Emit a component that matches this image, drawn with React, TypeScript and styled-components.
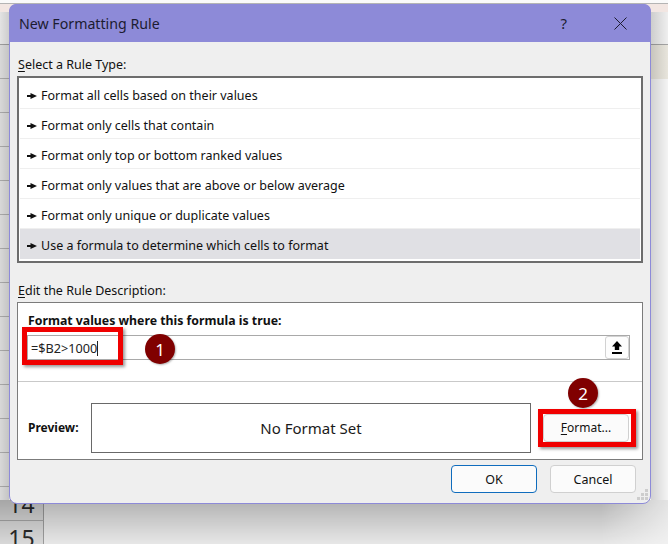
import React from "react";
import styled, { createGlobalStyle } from "styled-components";

const Global = createGlobalStyle`
  html, body { margin: 0; padding: 0; }
  body { width: 668px; height: 544px; overflow: hidden; background: #f4f4f4; font-family: "Noto Sans", "Open Sans", sans-serif; }
`;

const Sheet = styled.div`
  position: relative;
  width: 668px;
  height: 544px;
  overflow: hidden;
  background: #f2f2f2;
  display: flex;
  flex-direction: column;
`;

const TabStrip = styled.div`
  flex: none;
  height: 4px;
  box-sizing: border-box;
  background: #fafafa;
  border-bottom: 1px solid #b4b4b4;
`;

const ColumnHeader = styled.div`
  flex: none;
  height: 41px;
  box-sizing: border-box;
  border-bottom: 1px solid #a4a4a4;
  background: linear-gradient(#f2e6e2 0, #f2e6e2 8px, #efefef 8px);
`;

const SheetRow = styled.div`
  flex: none;
  height: 34px;
  display: flex;
`;

const RowNumber = styled.div`
  flex: none;
  width: 44px;
  box-sizing: border-box;
  background: #e4e4e4;
  border-right: 1px solid #a4a4a4;
  border-bottom: 1px solid #b0b0b0;
  color: #2c2c2c;
  font-size: 23px;
  line-height: 34px;
  text-align: center;
`;

const SheetCell = styled.div<{ $filled?: boolean }>`
  flex: 1;
  background: ${(p) => (p.$filled ? "#e8e5dc" : "#f4f4f4")};
`;

const ShadowBelow = styled.div`
  position: absolute;
  left: 0;
  top: 500px;
  width: 668px;
  height: 44px;
  background: linear-gradient(rgba(0, 0, 0, 0.27), rgba(0, 0, 0, 0.05));
  -webkit-mask-image: linear-gradient(to right, #000 90%, rgba(0, 0, 0, 0.25));
  mask-image: linear-gradient(to right, #000 90%, rgba(0, 0, 0, 0.25));
`;

const ShadowRight = styled.div`
  position: absolute;
  left: 651px;
  top: 12px;
  width: 17px;
  height: 488px;
  background: linear-gradient(to right, rgba(0, 0, 0, 0.14), rgba(0, 0, 0, 0));
`;

const ShadowLeft = styled.div`
  position: absolute;
  left: 0;
  top: 12px;
  width: 9px;
  height: 488px;
  background: linear-gradient(to left, rgba(0, 0, 0, 0.14), rgba(0, 0, 0, 0.05));
`;

const Dialog = styled.div`
  position: absolute;
  left: 9px;
  top: 4px;
  width: 642px;
  height: 500px;
  box-sizing: border-box;
  background: #efefef;
  border: 1px solid #8d8ad8;
  border-radius: 8px;
  display: flex;
  flex-direction: column;
`;

const TitleBar = styled.div`
  flex: none;
  height: 38px;
  margin: -1px -1px 0;
  padding: 0 24px 0 10px;
  background: #8d8ad8;
  border-radius: 7px 7px 0 0;
  display: flex;
  align-items: center;
  color: #1c1c30;
  font-size: 14.2px;
`;

const TitleText = styled.span`
  flex: 1;
`;

const HelpGlyph = styled.span`
  font-size: 15px;
  margin-right: 47px;
`;

const Body = styled.div`
  flex: 1;
  display: flex;
  flex-direction: column;
  padding: 11px 7px 0 7px;
`;

const SectionLabel = styled.div`
  box-sizing: border-box;
  height: 23px;
  padding: 4px 0 0 1px;
  font-size: 12.5px;
  line-height: 16px;
  color: #111;
`;

const RuleList = styled.div`
  box-sizing: border-box;
  height: 187px;
  margin-bottom: 16px;
  padding: 1px;
  background: #fff;
  border: 2px solid #6d6d6d;
`;

const RuleRow = styled.div<{ $active?: boolean }>`
  box-sizing: border-box;
  height: 30px;
  display: flex;
  align-items: center;
  gap: 4px;
  padding: 4px 0 0 7px;
  font-size: 12.5px;
  color: #111;
  border-bottom: 1px solid ${(p) => (p.$active ? "transparent" : "#efefef")};
  background: ${(p) => (p.$active ? "#e0e0e4" : "#fff")};
`;

const Panel = styled.div`
  box-sizing: border-box;
  height: 158px;
  background: #fff;
  border: 1px solid #7b7b7b;
  display: flex;
  flex-direction: column;
`;

const PanelTop = styled.div`
  flex: none;
  box-sizing: border-box;
  height: 79px;
  padding: 10px 12px 0 9px;
  border-bottom: 1px solid #c9c9c9;
`;

const BoldLabel = styled.div`
  margin: 0 0 6px 1px;
  font-weight: 700;
  font-size: 12.3px;
  line-height: 16px;
  color: #111;
`;

const Formula = styled.div`
  box-sizing: border-box;
  height: 25px;
  padding-left: 3px;
  border: 1px solid #a9a9a9;
  display: flex;
  align-items: center;
  justify-content: space-between;
  font-size: 12.7px;
  color: #222;
`;

const Caret = styled.span`
  display: inline-block;
  width: 1px;
  height: 15px;
  background: #222;
  vertical-align: -3px;
`;

const CollapseButton = styled.div`
  box-sizing: border-box;
  width: 24px;
  height: 23px;
  border: 1px solid #d2d2d2;
  border-radius: 3px;
  background: #fdfdfd;
  display: flex;
  align-items: center;
  justify-content: center;
`;

const PreviewRow = styled.div`
  flex: 1;
  display: flex;
  align-items: center;
  padding: 14px 0 0 10px;
`;

const PreviewLabel = styled.div`
  width: 63px;
  font-weight: 700;
  font-size: 12px;
  color: #111;
`;

const PreviewBox = styled.div`
  box-sizing: border-box;
  width: 440px;
  height: 50px;
  margin-right: 12px;
  border: 1px solid #696969;
  display: flex;
  align-items: center;
  justify-content: center;
  font-size: 15px;
  color: #1a1a1a;
`;

const Button = styled.div<{ $primary?: boolean }>`
  box-sizing: border-box;
  width: 86px;
  height: 28px;
  border: 1px solid ${(p) => (p.$primary ? "#0f6cbd" : "#d0d0d0")};
  border-radius: 4px;
  background: #fbfbfb;
  display: flex;
  align-items: center;
  justify-content: center;
  font-size: 12.5px;
  color: #111;
`;

const FormatButton = styled(Button)`
  font-size: 12px;
`;

const Footer = styled.div`
  display: flex;
  justify-content: flex-end;
  gap: 13px;
  padding: 5px 7px 0 0;
`;

const Mark = styled.span`
  text-decoration: underline;
  text-underline-offset: 2px;
`;

const Grip = styled.svg`
  position: absolute;
  right: 1px;
  bottom: 2px;
`;

const RedBox = styled.div<{ $x: number; $y: number; $w: number; $h: number }>`
  position: absolute;
  left: ${(p) => p.$x}px;
  top: ${(p) => p.$y}px;
  width: ${(p) => p.$w}px;
  height: ${(p) => p.$h}px;
  box-sizing: border-box;
  border: 5px solid #f00000;
  box-shadow: 2px 2px 3px rgba(0, 0, 0, 0.4);
`;

const Badge = styled.div<{ $x: number; $y: number }>`
  position: absolute;
  left: ${(p) => p.$x}px;
  top: ${(p) => p.$y}px;
  width: 30px;
  height: 30px;
  border-radius: 50%;
  background: #800000;
  color: #fff;
  display: flex;
  align-items: center;
  justify-content: center;
  font-size: 17px;
  box-shadow: 1px 1px 2px rgba(0, 0, 0, 0.3);
`;

const Arrow = () => (
  <svg width="10" height="6" viewBox="0 0 10 6" aria-hidden="true">
    <path d="M0 2h3.5V0L10 3 3.5 6V4H0z" fill="#111" />
  </svg>
);

const UploadIcon = () => (
  <svg width="12" height="15" viewBox="0 0 12 15" aria-hidden="true">
    <path d="M6 1l5 5.5H8.2V10H3.8V6.5H1z M1 12h10v2H1z" fill="#000" />
  </svg>
);

const CloseIcon = () => (
  <svg width="13" height="13" viewBox="0 0 13 13" aria-hidden="true">
    <path d="M.5.5l12 12M12.5.5l-12 12" stroke="#1c1c30" strokeWidth="1" fill="none" />
  </svg>
);

const GripIcon = () => (
  <Grip width="13" height="12" viewBox="0 0 13 12" aria-hidden="true">
    <path d="M9 0h3v3H9z M5 4h3v3H5z M9 4h3v3H9z M1 8h3v3H1z M5 8h3v3H5z M9 8h3v3H9z" fill="#cdcdcd" />
  </Grip>
);

const rules = [
  "Format all cells based on their values",
  "Format only cells that contain",
  "Format only top or bottom ranked values",
  "Format only values that are above or below average",
  "Format only unique or duplicate values",
  "Use a formula to determine which cells to format",
];

const sheetRows = [1, 2, 3, 4, 5, 6, 7, 8, 9, 10, 11, 12, 13, 14, 15];

export default function App() {
  return (
    <Sheet>
      <Global />
      <TabStrip />
      <ColumnHeader />
      {sheetRows.map((n) => (
        <SheetRow key={n}>
          <RowNumber>{n >= 14 ? n : ""}</RowNumber>
          <SheetCell $filled={n === 1} />
        </SheetRow>
      ))}
      <ShadowBelow />
      <ShadowRight />
      <ShadowLeft />
      <Dialog>
        <TitleBar>
          <TitleText>New Formatting Rule</TitleText>
          <HelpGlyph>?</HelpGlyph>
          <CloseIcon />
        </TitleBar>
        <Body>
          <SectionLabel>
            <Mark>S</Mark>elect a Rule Type:
          </SectionLabel>
          <RuleList>
            {rules.map((r, i) => (
              <RuleRow key={r} $active={i === 5}>
                <Arrow />
                {r}
              </RuleRow>
            ))}
          </RuleList>
          <SectionLabel>
            <Mark>E</Mark>dit the Rule Description:
          </SectionLabel>
          <Panel>
            <PanelTop>
              <BoldLabel>Format values where this formula is true:</BoldLabel>
              <Formula>
                <span>
                  =$B2&gt;1000
                  <Caret />
                </span>
                <CollapseButton>
                  <UploadIcon />
                </CollapseButton>
              </Formula>
            </PanelTop>
            <PreviewRow>
              <PreviewLabel>Preview:</PreviewLabel>
              <PreviewBox>No Format Set</PreviewBox>
              <FormatButton>
                <span>
                  <Mark>F</Mark>ormat...
                </span>
              </FormatButton>
            </PreviewRow>
          </Panel>
          <Footer>
            <Button $primary>OK</Button>
            <Button>Cancel</Button>
          </Footer>
        </Body>
        <GripIcon />
      </Dialog>
      <RedBox $x={22} $y={327} $w={101} $h={38} />
      <Badge $x={145} $y={334}>1</Badge>
      <RedBox $x={538} $y={409} $w={98} $h={38} />
      <Badge $x={568} $y={378}>2</Badge>
    </Sheet>
  );
}
